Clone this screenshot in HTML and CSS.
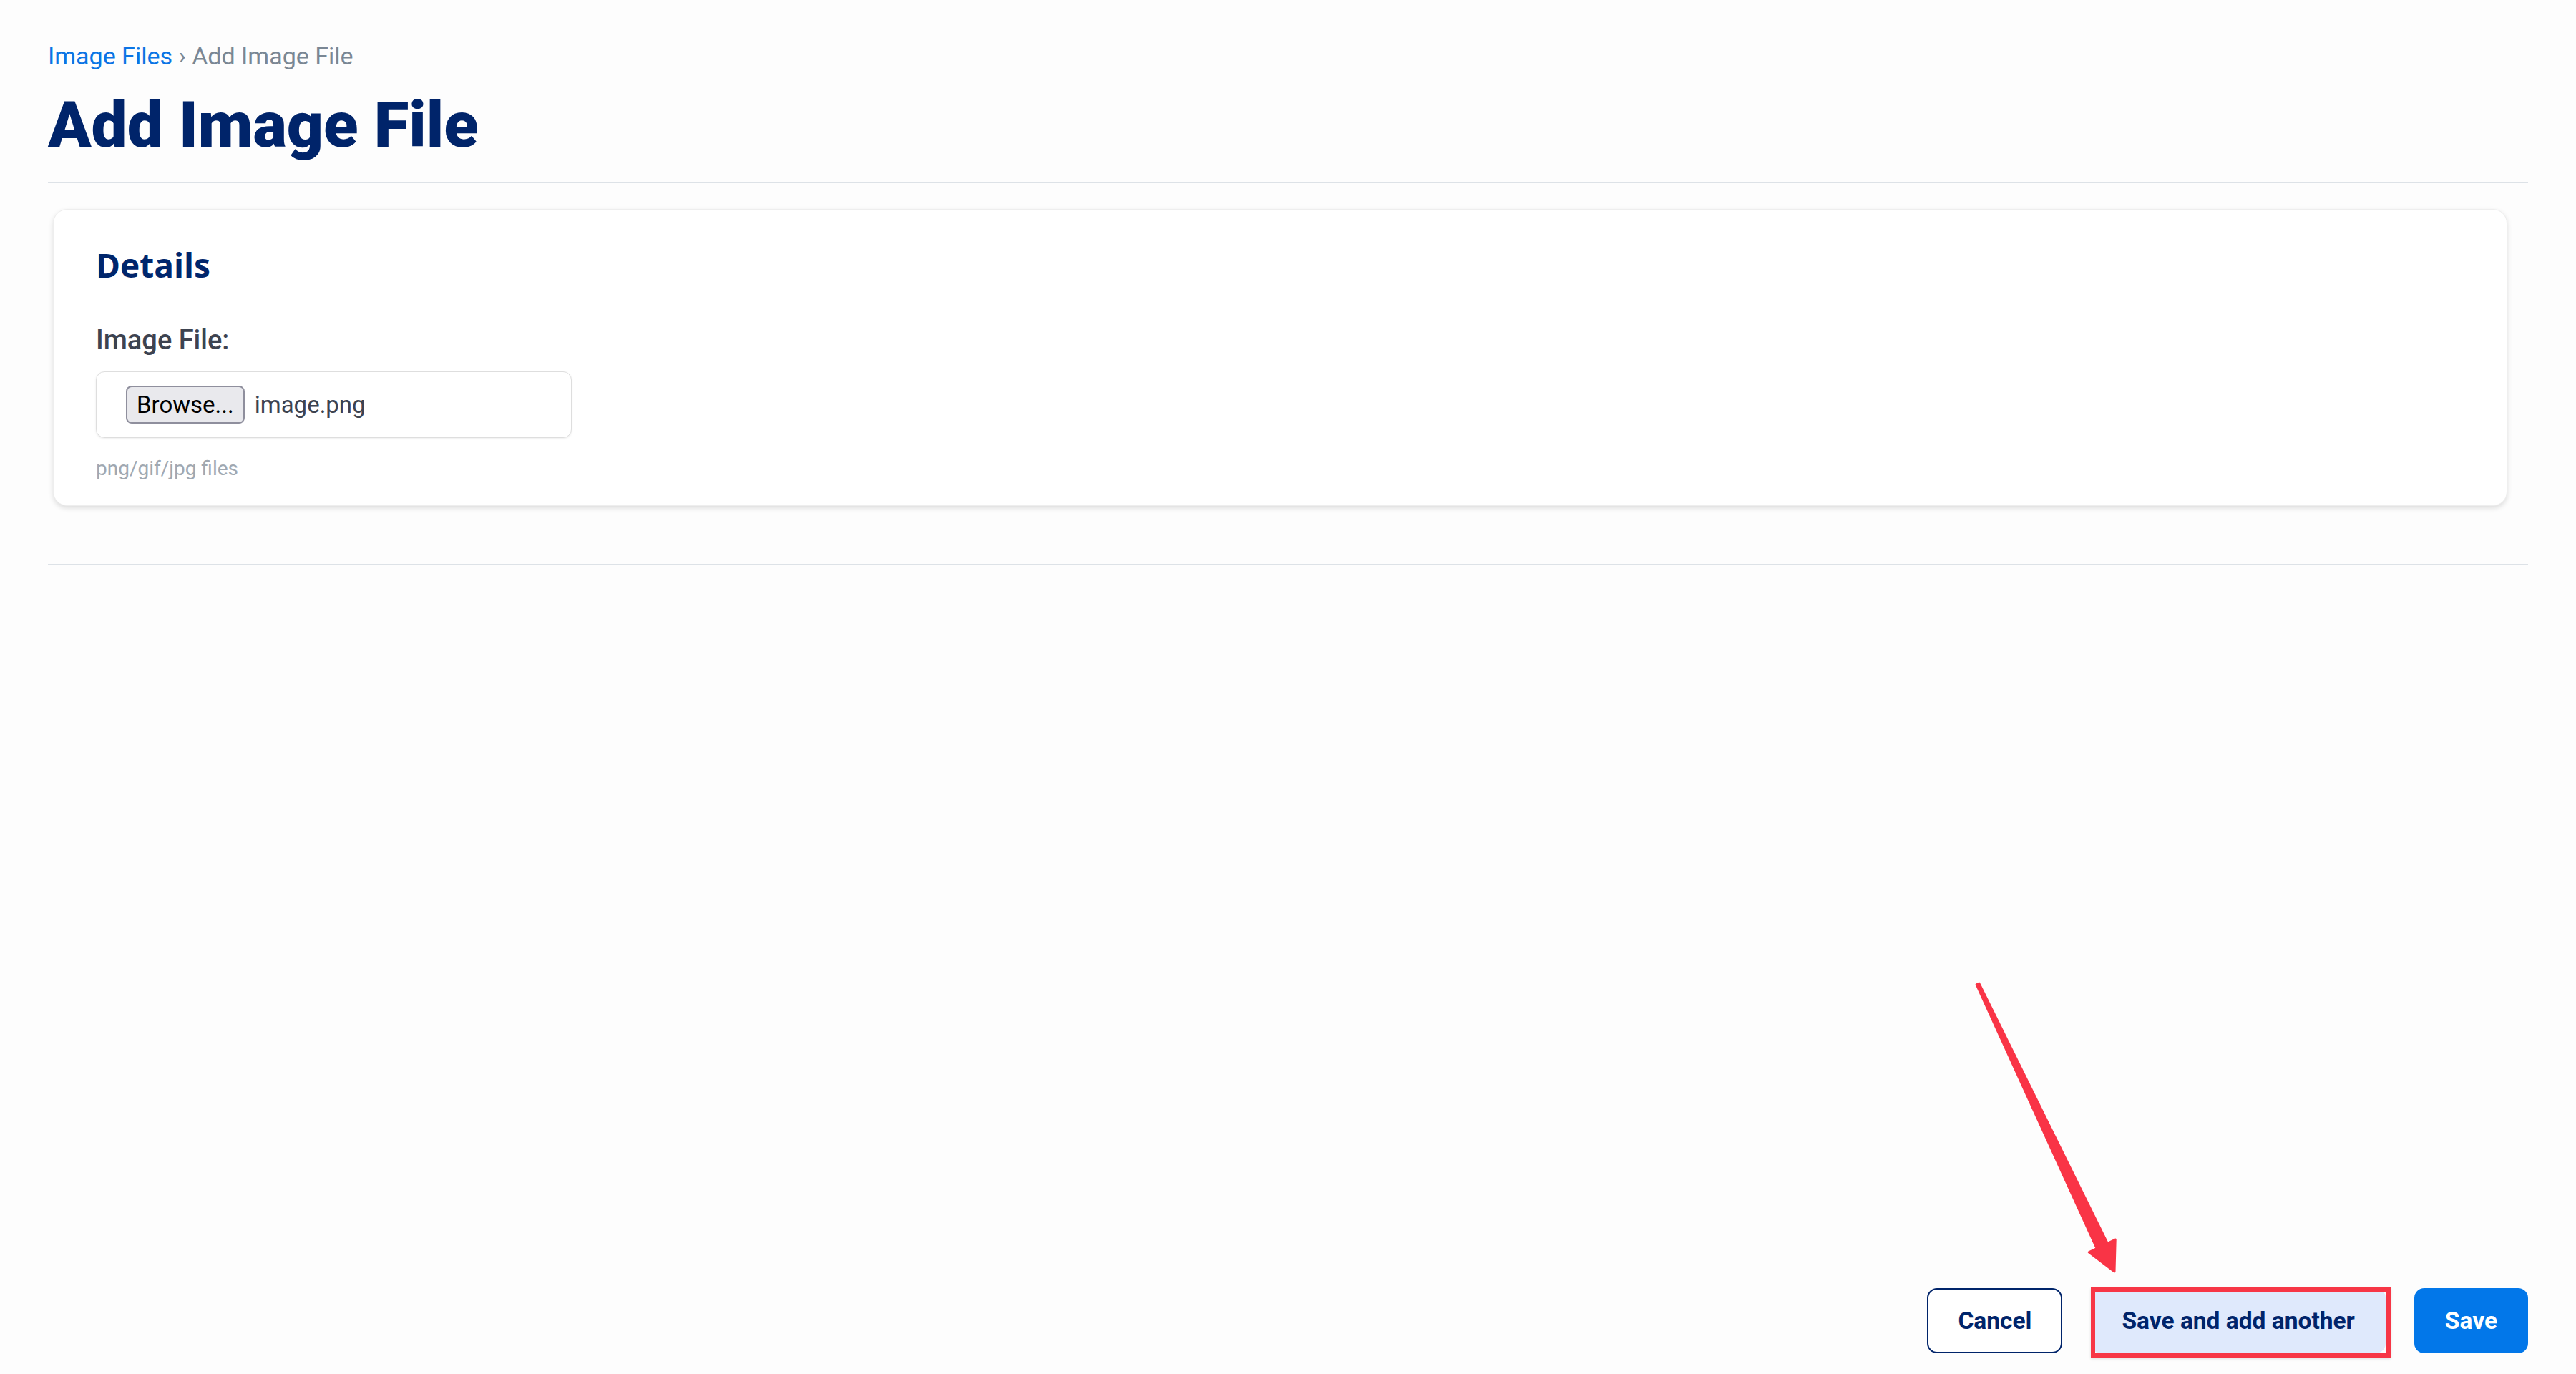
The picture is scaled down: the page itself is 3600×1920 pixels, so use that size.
FILE: index.html
```html
<!DOCTYPE html>
<html lang="en">
<head>
<meta charset="utf-8">
<title>Add Image File</title>
<link rel="stylesheet" href="styles.css">
</head>
<body>
<div class="page">
  <nav class="breadcrumb"><a class="crumb-link" href="#">Image Files</a> <span class="crumb-sep">›</span> <span class="crumb-current">Add Image File</span></nav>
  <h1 class="title">Add Image File</h1>
  <hr class="divider">
  <section class="card">
    <h2 class="card-title">Details</h2>
    <label class="field-label">Image File:</label>
    <div class="file-input">
      <span class="browse-btn">Browse...</span>
      <span class="file-name">image.png</span>
    </div>
    <p class="help">png/gif/jpg files</p>
  </section>
  <hr class="divider divider-low">
  <div class="actions">
    <button class="btn btn-outline">Cancel</button>
    <span class="btn-wrap">
      <button class="btn btn-soft">Save and add another</button>
      <span class="highlight"></span>
    </span>
    <button class="btn btn-primary">Save</button>
  </div>
</div>
<svg class="annotation" width="3600" height="1920" viewBox="0 0 3600 1920">
  <polygon points="2765.8,1374.1 2945.3,1737.3 2956.2,1732.0 2955,1777 2919.2,1749.8 2930.1,1744.5 2762.2,1375.9" fill="#f93446" stroke="#f93446" stroke-width="3" stroke-linejoin="round"/>
</svg>
</body>
</html>
```

FILE: styles.css
```css
html, body {
  margin: 0;
  padding: 0;
}
body {
  background: #fdfdfd;
  font-family: Roboto, "Liberation Sans", Arial, sans-serif;
  position: relative;
  overflow: hidden;
}
.page {
  box-sizing: border-box;
  min-height: 1920px;
  padding: 58px 67px 29px 67px;
  display: flex;
  flex-direction: column;
}
.breadcrumb {
  font-size: 34px;
  line-height: 40px;
  color: #7a8794;
}
.crumb-link {
  color: #0b74e5;
  text-decoration: none;
}
.crumb-sep, .crumb-current {
  color: #7a8794;
}
.title {
  margin: 32px 0 0 0;
  font-family: Roboto, "Liberation Sans", sans-serif;
  font-weight: 900;
  font-size: 89px;
  line-height: 89px;
  color: #00246a;
}
.divider {
  margin: 35px 0 0 0;
  border: 0;
  height: 2px;
  background: #dde2e7;
}
.card {
  margin: 36px 29px 0 7px;
  background: #ffffff;
  border: 1px solid #eeeeee;
  border-radius: 20px;
  box-shadow: 0 3px 7px rgba(0, 0, 0, 0.13);
  padding: 49px 62px 34px 59px;
  display: flex;
  flex-direction: column;
  align-items: flex-start;
}
.card-title {
  margin: 0;
  font-family: "Open Sans", "Noto Sans", sans-serif;
  font-weight: 700;
  font-size: 46px;
  line-height: 56px;
  color: #00266c;
}
.field-label {
  margin-top: 55px;
  font-size: 38px;
  line-height: 44px;
  font-weight: 500;
  color: #3d4350;
}
.file-input {
  margin-top: 22px;
  box-sizing: border-box;
  width: 665px;
  height: 93px;
  border: 1px solid #dedede;
  border-radius: 12px;
  box-shadow: 0 1px 3px rgba(0, 0, 0, 0.08);
  background: #ffffff;
  padding: 0 0 0 41px;
  display: flex;
  align-items: center;
  gap: 14px;
}
.browse-btn {
  box-sizing: border-box;
  height: 53px;
  padding: 0 13px;
  display: flex;
  align-items: center;
  background: #e9e9ed;
  border: 2px solid #8f8f9d;
  border-radius: 8px;
  font-size: 33px;
  color: #000000;
}
.file-name {
  font-size: 33px;
  color: #3d4350;
}
.help {
  margin: 26px 0 0 0;
  font-size: 28px;
  line-height: 34px;
  color: #a0a8b1;
}
.divider-low {
  margin-top: 81px;
}
.actions {
  margin-top: auto;
  display: flex;
  justify-content: flex-end;
  gap: 40px;
}
.btn {
  box-sizing: border-box;
  height: 91px;
  padding: 0 41px;
  border-radius: 14px;
  font-family: Roboto, "Liberation Sans", sans-serif;
  font-weight: 700;
  font-size: 33.5px;
  border: 2px solid transparent;
  cursor: pointer;
}
.btn-outline {
  background: #ffffff;
  border-color: #00246a;
  color: #00246a;
}
.btn-soft {
  background: #dfe9fc;
  color: #00246a;
}
.btn-primary {
  background: #0277e9;
  color: #ffffff;
}
.btn-wrap {
  position: relative;
  display: flex;
}
.highlight {
  position: absolute;
  left: 0;
  top: -1px;
  right: -7px;
  bottom: -6px;
  border: 6px solid #f73646;
  box-shadow: 0 2px 4px rgba(0, 0, 0, 0.12);
  pointer-events: none;
}
.annotation {
  position: absolute;
  left: 0;
  top: 0;
  pointer-events: none;
}
```
